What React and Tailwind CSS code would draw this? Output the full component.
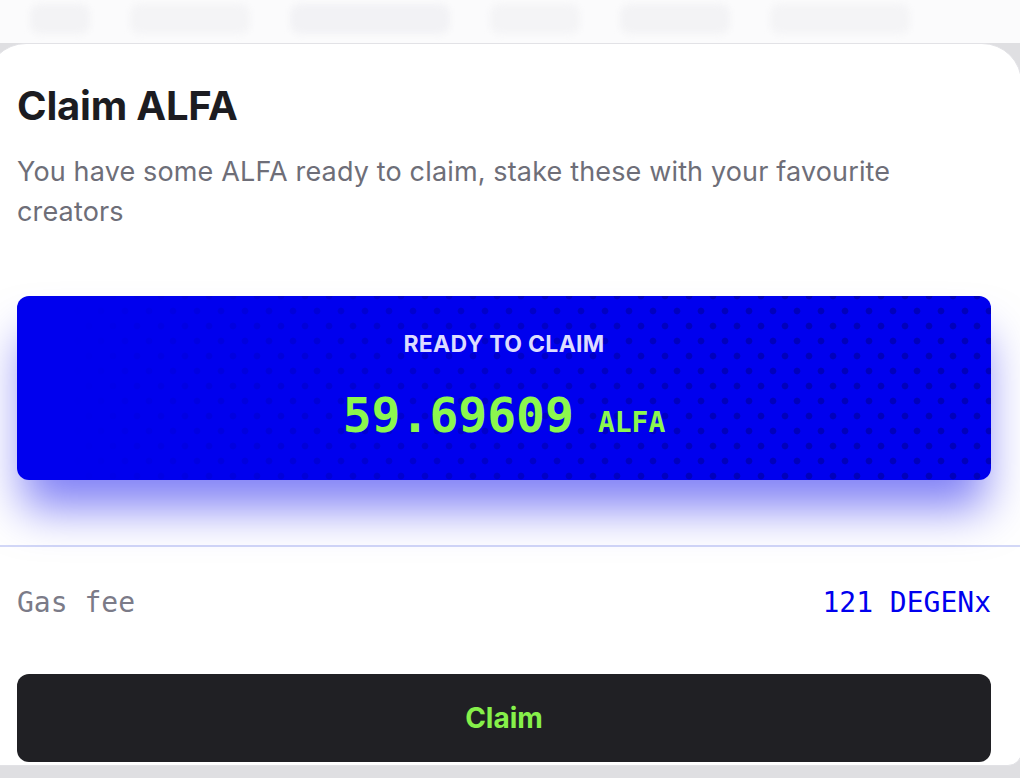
export default function App() {
  const dots = {
    backgroundImage:
      "radial-gradient(circle, rgba(0,0,110,0.4) 2.8px, transparent 3.8px), radial-gradient(circle, rgba(0,0,110,0.4) 2.8px, transparent 3.8px)",
    backgroundSize: "24px 30px, 24px 30px",
    backgroundPosition: "0 0, 12px 15px",
  };
  return (
    <div className="w-[1020px] h-[778px] overflow-hidden bg-[#dfdfe2] font-['Inter',sans-serif] flex flex-col">
      <div className="h-[43px] shrink-0 bg-[#fbfbfc] flex items-start gap-[40px] px-[30px] pt-[4px] overflow-hidden">
        <div className="w-[60px] h-[30px] rounded-[10px] bg-[#f3f3f5] blur-[3px]" />
        <div className="w-[120px] h-[30px] rounded-[10px] bg-[#f4f4f6] blur-[3px]" />
        <div className="w-[160px] h-[30px] rounded-[10px] bg-[#f2f2f5] blur-[3px]" />
        <div className="w-[90px] h-[30px] rounded-[10px] bg-[#f4f4f6] blur-[3px]" />
        <div className="w-[110px] h-[30px] rounded-[10px] bg-[#f3f3f5] blur-[3px]" />
        <div className="w-[140px] h-[30px] rounded-[10px] bg-[#f4f4f6] blur-[3px]" />
      </div>
      <div className="-ml-[14px] w-[1036px] h-[723px] shrink-0 bg-white border border-[#e2e2e6] rounded-t-[40px] rounded-b-[14px] px-[30px] pt-[38px] flex flex-col">
        <h1 className="text-[40px] leading-[48px] font-bold text-[#1c1c21] tracking-[-0.005em]">
          Claim ALFA
        </h1>
        <p className="mt-[22px] text-[27px] leading-[40px] tracking-[0.15px] text-[#6e6e78]">
          You have some ALFA ready to claim, stake these with your favourite creators
        </p>
        <div className="mt-[64px] h-[184px] shrink-0 relative rounded-[12px] bg-[#0000ee] shadow-[0_34px_46px_-6px_rgba(0,0,238,0.5)] flex flex-col items-center pt-[34px] overflow-hidden">
          <div
            className="absolute inset-0 [mask-image:linear-gradient(to_right,transparent_5%,rgba(0,0,0,0.6)_40%,black_75%)]"
            style={dots}
          />
          <div className="relative text-[23px] leading-[28px] font-bold text-[#dcdcff] tracking-[0.3px]">
            READY TO CLAIM
          </div>
          <div className="relative mt-[29px] flex items-baseline font-['DejaVu_Sans_Mono',monospace] font-bold text-[#8cf74e]">
            <span className="text-[48px] leading-[56px]">59.69609</span>
            <span className="ml-[24px] text-[28px] leading-[56px]">ALFA</span>
          </div>
        </div>
        <div className="-mx-[30px] mt-[65px] h-[2px] shrink-0 bg-[#d3d8f7]" />
        <div className="mt-[38px] flex justify-between items-center font-['DejaVu_Sans_Mono',monospace] text-[28px] leading-[36px]">
          <span className="text-[#7b7b88]">Gas fee</span>
          <span className="text-[#0000ee]">121 DEGENx</span>
        </div>
        <button className="mt-[53px] h-[88px] shrink-0 w-full rounded-[12px] bg-[#202024] text-[#86f04a] text-[28px] font-bold flex items-center justify-center">
          Claim
        </button>
      </div>
    </div>
  );
}
